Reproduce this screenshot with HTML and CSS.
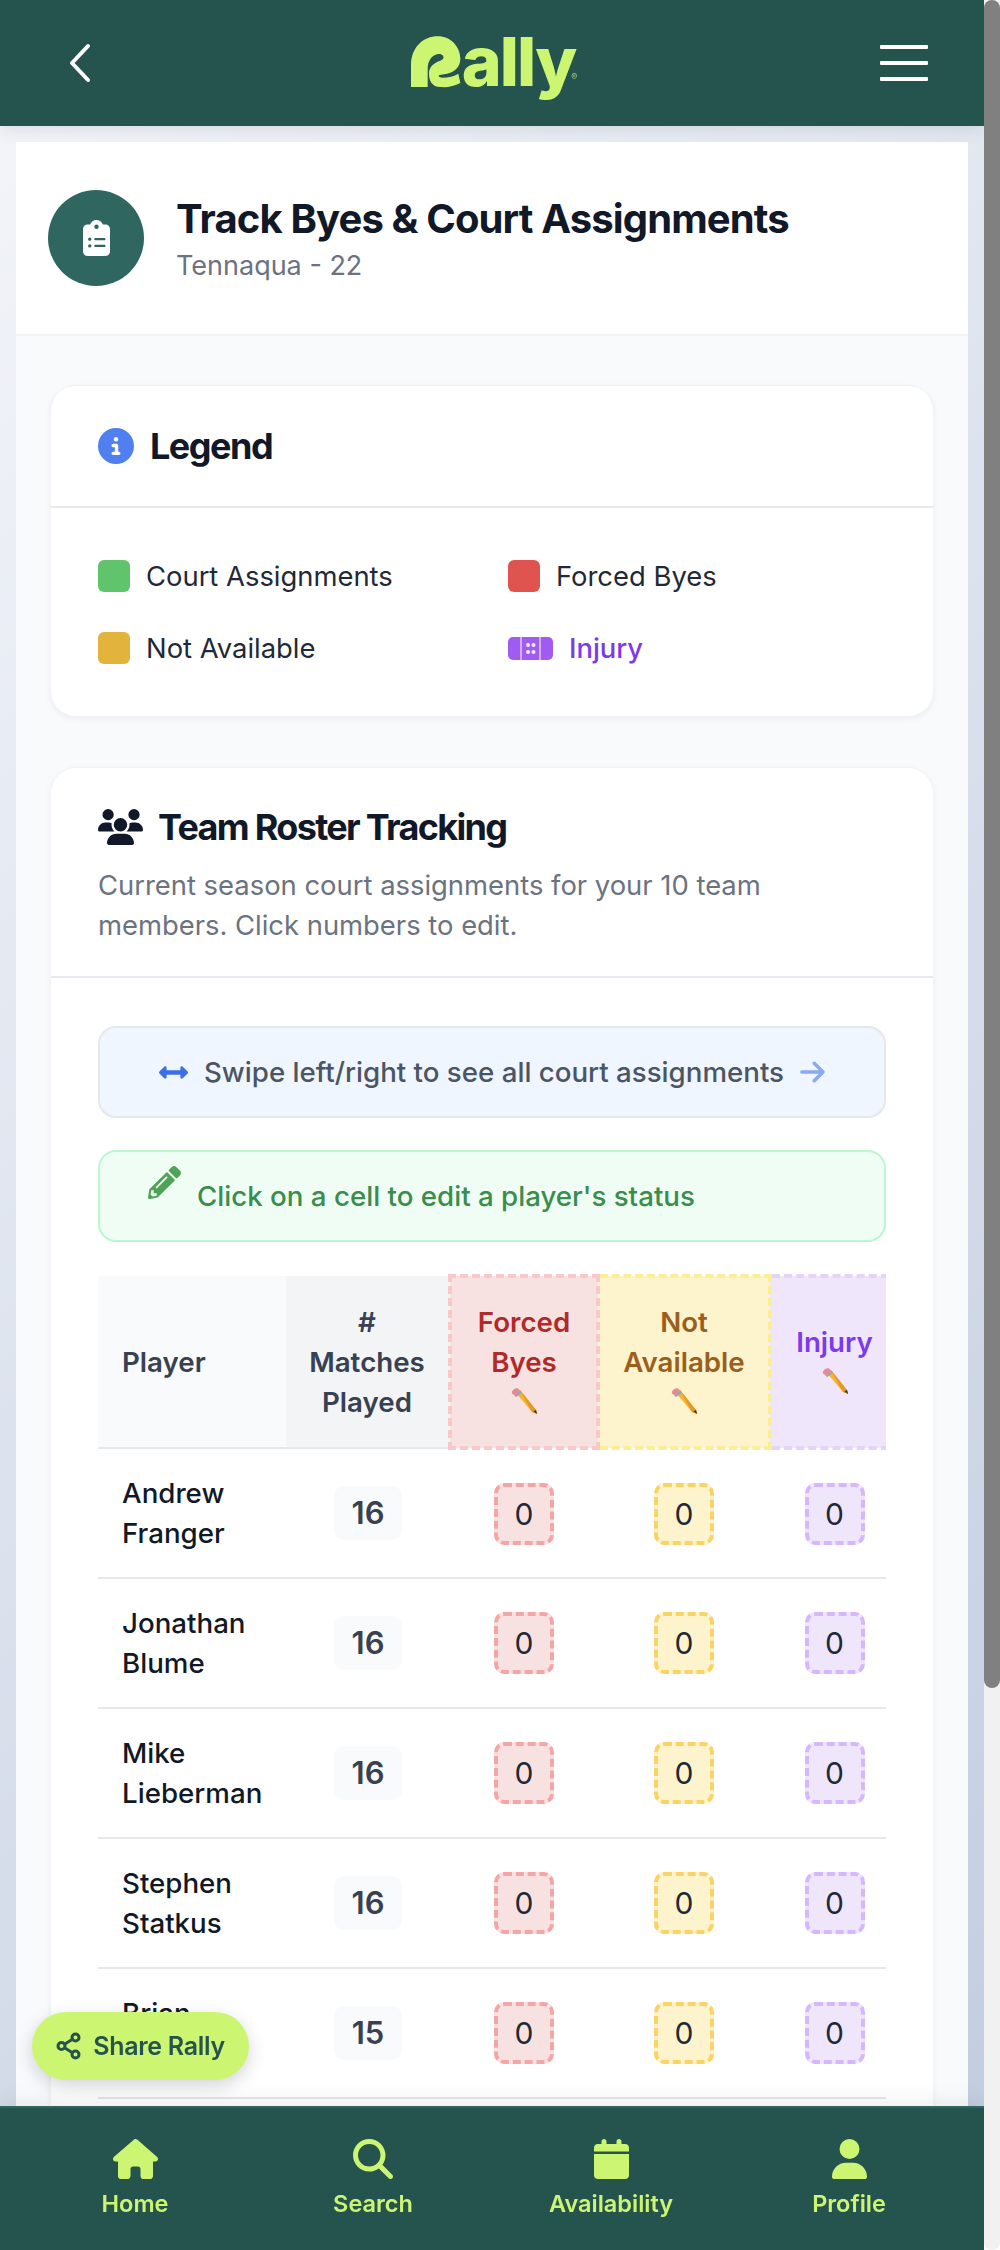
FILE: index.html
```html
<!DOCTYPE html>
<html lang="en">
<head>
    <meta charset="UTF-8">
    <meta name="viewport" content="width=device-width, initial-scale=1.0">
    <title>Track Byes &amp; Court Assignments</title>
    <link rel="stylesheet" href="styles.css">
</head>
<body>
<div class="app">
    <header class="topbar">
        <a class="back" href="#">
            <svg width="24" height="40" viewBox="0 0 24 40"><path d="M20 3 L4 20 L20 37" fill="none" stroke="#fff" stroke-width="4" stroke-linecap="round" stroke-linejoin="round"/></svg>
        </a>
        <a class="logo" href="#">
            <svg class="logo-r" width="50" height="52" viewBox="92 48 150 154"><path fill="#ccf672" d="M92 200 L92 135 C92 80 130 48 172 48 C212 48 240 80 240 115 C240 140 222 155 200 160 L178 164 C172 166 176 172 186 172 C205 172 222 168 234 160 L240 188 C222 198 200 202 180 200 C155 200 146 180 146 160 C146 140 160 128 178 122 C188 118 192 112 188 106 C182 98 170 100 160 106 C148 114 142 128 142 145 L142 200 Z"/></svg>
            <span class="logo-text">ally</span><span class="logo-mark">®</span>
        </a>
        <button class="menu" type="button"><span></span><span></span><span></span></button>
    </header>

    <main class="main">
        <div class="container">
            <!-- Page title -->
            <section class="hero">
                <div class="hero-icon">
                    <svg width="27" height="36" viewBox="0 0 384 512"><path fill="#fff" d="M192 0c-41.8 0-77.4 26.7-90.5 64H64C28.7 64 0 92.7 0 128V448c0 35.3 28.7 64 64 64H320c35.3 0 64-28.7 64-64V128c0-35.3-28.7-64-64-64H282.5C269.4 26.7 233.8 0 192 0zm0 64a32 32 0 1 1 0 64 32 32 0 1 1 0-64zM72 272a24 24 0 1 1 48 0 24 24 0 1 1 -48 0zm104-16H304c8.8 0 16 7.2 16 16s-7.2 16-16 16H176c-8.8 0-16-7.2-16-16s7.2-16 16-16zM72 368a24 24 0 1 1 48 0 24 24 0 1 1 -48 0zm88 0c0-8.8 7.2-16 16-16H304c8.8 0 16 7.2 16 16s-7.2 16-16 16H176c-8.8 0-16-7.2-16-16z"/></svg>
                </div>
                <div>
                    <h1>Track Byes &amp; Court Assignments</h1>
                    <p class="hero-sub">Tennaqua - 22</p>
                </div>
            </section>

            <div class="cards">
                <!-- Legend -->
                <section class="card">
                    <div class="card-head legend-head">
                        <svg width="36" height="36" viewBox="0 0 512 512"><path fill="#5080ef" d="M256 512A256 256 0 1 0 256 0a256 256 0 1 0 0 512zM216 336h24V272H216c-13.3 0-24-10.7-24-24s10.7-24 24-24h48c13.3 0 24 10.7 24 24v88h8c13.3 0 24 10.7 24 24s-10.7 24-24 24H216c-13.3 0-24-10.7-24-24s10.7-24 24-24zm40-208a32 32 0 1 1 0 64 32 32 0 1 1 0-64z"/></svg>
                        <h2>Legend</h2>
                    </div>
                    <div class="legend">
                        <div class="legend-item"><span class="swatch green"></span>Court Assignments</div>
                        <div class="legend-item"><span class="swatch red"></span>Forced Byes</div>
                        <div class="legend-item"><span class="swatch amber"></span>Not Available</div>
                        <div class="legend-item injury">
                            <svg width="45" height="23" viewBox="0 0 45 23">
                                <rect width="45" height="23" rx="5" fill="#a05cf0"/>
                                <path d="M13 0V23M32 0V23" stroke="#f3eafd" stroke-width="1.2"/>
                                <circle cx="20" cy="8" r="2" fill="#f3eafd"/><circle cx="25.500" cy="8" r="2" fill="#f3eafd"/>
                                <circle cx="20" cy="15" r="2" fill="#f3eafd"/><circle cx="25.500" cy="15" r="2" fill="#f3eafd"/>
                            </svg>
                            Injury
                        </div>
                    </div>
                </section>

                <!-- Team roster -->
                <section class="card">
                    <div class="card-head roster-head">
                        <div class="roster-title">
                            <svg width="45" height="36" viewBox="0 0 640 512"><path fill="#111827" d="M144 0a80 80 0 1 1 0 160A80 80 0 1 1 144 0zM512 0a80 80 0 1 1 0 160A80 80 0 1 1 512 0zM0 298.7C0 239.8 47.8 192 106.7 192h42.7c15.9 0 31 3.5 44.6 9.7c-1.3 7.2-1.9 14.7-1.9 22.3c0 38.2 16.8 72.5 43.3 96c-.2 0-.4 0-.7 0H21.3C9.6 320 0 310.4 0 298.7zM405.3 320c-.2 0-.4 0-.7 0c26.6-23.5 43.3-57.8 43.3-96c0-7.6-.7-15-1.9-22.3c13.6-6.3 28.7-9.7 44.6-9.7h42.7C592.2 192 640 239.8 640 298.7c0 11.8-9.6 21.3-21.3 21.3H405.3zM224 224a96 96 0 1 1 192 0 96 96 0 1 1 -192 0zM128 485.3C128 411.7 187.7 352 261.3 352H378.7C452.3 352 512 411.7 512 485.3c0 14.7-11.9 26.7-26.7 26.7H154.7c-14.7 0-26.7-11.9-26.7-26.7z"/></svg>
                            <h2>Team Roster Tracking</h2>
                        </div>
                        <p class="roster-sub">Current season court assignments for your 10 team members. Click numbers to edit.</p>
                    </div>
                    <div class="roster-body">
                        <div class="note note-blue">
                            <svg width="29" height="29" viewBox="0 0 512 512"><path fill="#3b6ee8" d="M377.941 169.941V216H134.059v-46.059c0-21.382-25.851-32.09-40.971-16.971L7.029 239.029c-9.373 9.373-9.373 24.569 0 33.941l86.059 86.059c15.119 15.119 40.971 4.411 40.971-16.971V296h243.882v46.059c0 21.382 25.851 32.09 40.971 16.971l86.059-86.059c9.373-9.373 9.373-24.569 0-33.941l-86.059-86.059c-15.12-15.12-40.971-4.412-40.971 16.97z"/></svg>
                            <span>Swipe left/right to see all court assignments</span>
                            <svg width="25" height="28" viewBox="0 0 448 512"><path fill="#8aa8f5" d="M438.6 278.6c12.5-12.5 12.5-32.8 0-45.3l-160-160c-12.5-12.5-32.8-12.5-45.3 0s-12.5 32.8 0 45.3L338.8 224 32 224c-17.7 0-32 14.3-32 32s14.3 32 32 32l306.7 0L233.4 393.4c-12.5 12.5-12.5 32.8 0 45.3s32.8 12.5 45.3 0l160-160z"/></svg>
                        </div>
                        <div class="note note-green">
                            <svg class="note-pencil" width="33" height="33" viewBox="0 0 512 512"><path fill="#4fa356" d="M497.9 142.1l-46.1 46.1c-4.7 4.7-12.3 4.7-17 0l-111-111c-4.7-4.7-4.7-12.3 0-17l46.1-46.1c18.7-18.7 49.1-18.7 67.9 0l60.1 60.1c18.8 18.7 18.8 49.1 0 67.9zM284.2 99.8L21.6 362.4.4 483.9c-2.9 16.4 11.4 30.6 27.8 27.8l121.5-21.3 262.6-262.6c4.7-4.7 4.7-12.3 0-17l-111-111c-4.8-4.7-12.4-4.7-17.1 0zM124.1 339.9c-5.5-5.5-5.5-14.3 0-19.8l154-154c5.5-5.5 14.3-5.5 19.8 0s5.5 14.3 0 19.8l-154 154c-5.5 5.5-14.3 5.5-19.8 0zM88 424h48v36.3l-64.5 11.3-31.1-31.1L51.7 376H88v48z"/></svg>
                            <span>Click on a cell to edit a player's status</span>
                        </div>

                        <div class="table-wrap">
                            <table class="roster">
                                <colgroup>
                                    <col class="col-player"><col class="col-played"><col class="col-forced"><col class="col-avail"><col class="col-injury">
                                </colgroup>
                                <thead>
                                    <tr>
                                        <th class="th-player">Player</th>
                                        <th class="th-played">#<br>Matches<br>Played</th>
                                        <th class="th-forced">Forced<br>Byes<br><svg class="emoji" width="28" height="28" viewBox="0 0 28 28"><use href="#pencil"/></svg></th>
                                        <th class="th-avail">Not<br>Available<br><svg class="emoji" width="28" height="28" viewBox="0 0 28 28"><use href="#pencil"/></svg></th>
                                        <th class="th-injury">Injury<br><svg class="emoji" width="28" height="28" viewBox="0 0 28 28"><use href="#pencil"/></svg></th>
                                    </tr>
                                </thead>
                                <tbody id="rosterRows"></tbody>
                            </table>
                        </div>
                    </div>
                </section>
            </div>
        </div>
    </main>

    <nav class="bottom-nav">
        <a href="#" class="nav-item">
            <svg width="45" height="40" viewBox="0 0 576 512"><path d="M575.8 255.5c0 18-15 32.1-32 32.1h-32l.7 160.2c0 2.7-.2 5.4-.5 8.1V472c0 22.1-17.9 40-40 40H456c-1.1 0-2.2 0-3.3-.1c-1.4 .1-2.8 .1-4.2 .1H416 392c-22.1 0-40-17.9-40-40V448 384c0-17.7-14.3-32-32-32H256c-17.7 0-32 14.3-32 32v64 24c0 22.1-17.9 40-40 40H160 128.1c-1.5 0-3-.1-4.5-.2c-1.2 .1-2.4 .2-3.6 .2H104c-22.1 0-40-17.9-40-40V360c0-.9 0-1.9 .1-2.8V287.6H32c-18 0-32-14-32-32.1c0-9 3-17 10-24L266.4 8c7-7 15-8 22-8s15 2 21 7L564.8 231.5c8 7 12 15 11 24z"/></svg>
            Home
        </a>
        <a href="#" class="nav-item">
            <svg width="40" height="40" viewBox="0 0 512 512"><path d="M416 208c0 45.9-14.9 88.3-40 122.7L502.6 457.4c12.5 12.5 12.5 32.8 0 45.3s-32.8 12.5-45.3 0L330.7 376c-34.4 25.2-76.8 40-122.7 40C93.1 416 0 322.9 0 208S93.1 0 208 0S416 93.1 416 208zM208 352a144 144 0 1 0 0-288 144 144 0 1 0 0 288z"/></svg>
            Search
        </a>
        <a href="#" class="nav-item">
            <svg width="35" height="40" viewBox="0 0 448 512"><path d="M96 32V64H48C21.5 64 0 85.5 0 112v48H448V112c0-26.5-21.5-48-48-48H352V32c0-17.7-14.3-32-32-32s-32 14.3-32 32V64H160V32c0-17.7-14.3-32-32-32S96 14.3 96 32zM448 192H0V464c0 26.5 21.5 48 48 48H400c26.5 0 48-21.5 48-48V192z"/></svg>
            Availability
        </a>
        <a href="#" class="nav-item">
            <svg width="35" height="40" viewBox="0 0 448 512"><path d="M224 256A128 128 0 1 0 224 0a128 128 0 1 0 0 256zm-45.7 48C79.8 304 0 383.8 0 482.3C0 498.7 13.3 512 29.7 512H418.3c16.4 0 29.7-13.3 29.7-29.7C448 383.8 368.2 304 269.7 304H178.3z"/></svg>
            Profile
        </a>
    </nav>
</div>

<!-- Page scrollbar -->
<div class="scrollbar"><div class="scrollbar-thumb"></div></div>

<button class="share" type="button">
    <svg width="25" height="28" viewBox="0 0 25 28"><g fill="none" stroke="#25544f" stroke-width="3"><circle cx="19.5" cy="5.5" r="3.5"/><circle cx="5.5" cy="14" r="3.5"/><circle cx="19.5" cy="22.5" r="3.5"/><path d="M8.5 12.2 L16.5 7.3 M8.5 15.8 L16.5 20.7"/></g></svg>
    Share Rally
</button>

<!-- Pencil used in the editable column headers -->
<svg width="0" height="0" class="defs">
    <defs>
        <g id="pencil">
            <path d="M6 6 L10 3 L26 23 L27 27 L22 25 Z" fill="#f2b632"/>
            <path d="M10 3 L26 23 L27 27 L22 25 L17 16 Z" fill="#e39a23"/>
            <path d="M2 6.5 C1 4 5 0.5 8 1.5 L11 4.5 L5.5 9 Z" fill="#e88a93"/>
            <path d="M4.5 8.5 L10.5 3.8 L12 5.5 L6 10.3 Z" fill="#9aa7b5"/>
            <path d="M23.5 24.2 L26 23 L27 27 Z" fill="#2b2b2b"/>
        </g>
    </defs>
</svg>

<script>
    // Players shown in the table
    const players = [
        { name: ['Andrew', 'Franger'], played: 16 },
        { name: ['Jonathan', 'Blume'], played: 16 },
        { name: ['Mike', 'Lieberman'], played: 16 },
        { name: ['Stephen', 'Statkus'], played: 16 },
        { name: ['Brian', '&nbsp;'], played: 15 }
    ];

    const rows = document.getElementById('rosterRows');
    players.forEach(player => {
        const tr = document.createElement('tr');
        tr.innerHTML = `
            <td class="td-name">${player.name[0]}<br>${player.name[1]}</td>
            <td><span class="played">${player.played}</span></td>
            <td><span class="count count-forced">0</span></td>
            <td><span class="count count-avail">0</span></td>
            <td><span class="count count-injury">0</span></td>
        `;
        rows.appendChild(tr);
    });
</script>
</body>
</html>
```
FILE: styles.css
```css
* {
    box-sizing: border-box;
}
html, body {
    margin: 0;
    height: 100%;
    overflow: hidden;
    background: #fff;
}
body {
    font-family: Inter, "Liberation Sans", sans-serif;
    color: #111827;
    display: flex;
}
h1, h2, p {
    margin: 0;
}
a {
    color: inherit;
    text-decoration: none;
}
.defs {
    position: absolute;
}

/* shell */
.app {
    flex: 1;
    min-width: 0;
    height: 100vh;
    overflow: hidden;
}
.scrollbar {
    width: 16px;
    height: 100vh;
    flex: none;
    background: #f1f1f1;
    border-radius: 0 0 8px 8px;
}
.scrollbar-thumb {
    height: 1688px;
    background: #808080;
    border-radius: 8px;
}

/* top bar */
.topbar {
    position: sticky;
    top: 0;
    z-index: 5;
    height: 126px;
    background: #25544f;
    box-shadow: 0 4px 16px rgba(30, 41, 59, 0.1);
    display: flex;
    align-items: center;
    justify-content: space-between;
    padding: 0 56px 0 68px;
}
.back {
    display: flex;
    width: 40px;
}
.logo {
    display: flex;
    align-items: flex-start;
    color: #ccf672;
    height: 64px;
}
.logo-r {
    margin-top: 5px;
    flex: none;
}
.logo-text {
    font-size: 68px;
    font-weight: 800;
    line-height: 60px;
    letter-spacing: -2px;
    margin-left: 1px;
}
.logo-mark {
    font-size: 9px;
    align-self: flex-end;
    margin-bottom: 13px;
    margin-left: -4px;
    opacity: 0.7;
}
.menu {
    width: 48px;
    background: none;
    border: none;
    padding: 0;
    display: flex;
    flex-direction: column;
    gap: 12px;
}
.menu span {
    height: 4px;
    background: #fff;
    border-radius: 1px;
}

/* page */
.main {
    min-height: 2730px;
    padding: 16px 16px 0;
    display: flex;
    background: linear-gradient(135deg, #f2f4f9, #b7c4da);
}
.container {
    flex: 1;
    min-width: 0;
    background: #f8fafc;
}
.hero {
    height: 194px;
    background: #fff;
    border-bottom: 2px solid #f1f3f6;
    padding: 48px 32px;
    display: flex;
    gap: 32px;
}
.hero-icon {
    width: 96px;
    height: 96px;
    border-radius: 50%;
    background: #2f6660;
    display: flex;
    align-items: center;
    justify-content: center;
    flex: none;
}
h1 {
    font-size: 40px;
    font-weight: 700;
    line-height: 50px;
    letter-spacing: -0.87px;
    margin-top: 4px;
}
.hero-sub {
    font-size: 27px;
    line-height: 40px;
    color: #6b7280;
    margin-top: 2px;
}
.cards {
    padding: 49px 34px 51px;
    display: flex;
    flex-direction: column;
    gap: 50px;
}
.card {
    background: #fff;
    border: 1px solid #f1f3f6;
    border-radius: 26px;
    box-shadow: 0 2px 6px rgba(15, 23, 42, 0.05);
}
.card-head {
    border-bottom: 2px solid #e8e9ef;
    padding: 0 47px;
}
h2 {
    font-size: 36px;
    font-weight: 700;
    letter-spacing: -1.5px;
}

/* legend */
.legend-head {
    height: 122px;
    display: flex;
    align-items: center;
    gap: 16px;
}
.legend {
    padding: 52px 47px;
    display: grid;
    grid-template-columns: 410px 1fr;
    row-gap: 40px;
}
.legend-item {
    height: 32px;
    display: flex;
    align-items: center;
    gap: 16px;
    font-size: 27.4px;
    color: #1f2937;
}
.swatch {
    width: 32px;
    height: 32px;
    border-radius: 6px;
}
.green { background: #5fc46b; }
.red { background: #e0544f; }
.amber { background: #e2b43c; }
.injury {
    color: #7c3aed;
    font-weight: 500;
}

/* roster */
.roster-head {
    height: 210px;
    padding-top: 37px;
}
.roster-title {
    display: flex;
    align-items: center;
    gap: 15px;
}
.roster-title h2 {
    letter-spacing: -1.7px;
}
.roster-sub {
    max-width: 700px;
    margin-top: 16px;
    font-size: 27.4px;
    line-height: 40px;
    color: #6b7280;
}
.roster-body {
    padding: 48px 47px;
}
.note {
    height: 92px;
    border: 2px solid #e5e7eb;
    border-radius: 18px;
    background: #eff6ff;
    font-size: 27.7px;
    font-weight: 500;
    color: #4b5563;
    display: flex;
    align-items: center;
    justify-content: center;
    gap: 16px;
}
.note-green {
    margin-top: 32px;
    background: #f0fdf4;
    border-color: #bbf7d0;
    color: #388e4a;
    justify-content: flex-start;
    padding-left: 48px;
    gap: 16px;
}
.note-pencil {
    position: relative;
    top: -14px;
}
.table-wrap {
    margin-top: 32px;
    overflow: hidden;
}
.roster {
    width: 801px;
    table-layout: fixed;
    border-collapse: collapse;
}
.col-player { width: 188px; }
.col-played { width: 164px; }
.col-forced { width: 148px; }
.col-avail { width: 172px; }
.col-injury { width: 129px; }
th {
    height: 172px;
    font-size: 27.7px;
    line-height: 40px;
    font-weight: 600;
    color: #374151;
    text-align: center;
    padding: 0;
    border-bottom: 2px solid #e5e7eb;
}
.th-player {
    background: #f9fafb;
    text-align: left;
    padding-left: 24px;
}
.th-played {
    background: #f3f4f6;
}
.th-forced {
    background: #f8e1e1;
    border: 4px dashed #f9c9c9;
    color: #b02a2a;
}
.th-avail {
    background: #fdf3cc;
    border: 4px dashed #fdee96;
    color: #9a5f1c;
}
.th-injury {
    background: #f0e6fc;
    border: 4px dashed #e4d4fb;
    color: #7c3aed;
}
.emoji {
    vertical-align: top;
    margin-top: 5px;
}
td {
    height: 130px;
    padding: 0;
    text-align: center;
    border-bottom: 2px solid #e5e7eb;
    font-size: 30px;
}
.td-name {
    text-align: left;
    padding-left: 24px;
    font-size: 27.7px;
    line-height: 40px;
    font-weight: 500;
    color: #111827;
}
.played {
    display: inline-block;
    width: 68px;
    height: 54px;
    line-height: 54px;
    border-radius: 10px;
    background: #f9fafb;
    font-size: 31px;
    font-weight: 600;
    color: #374151;
}
.count {
    display: inline-block;
    width: 60px;
    height: 62px;
    line-height: 54px;
    border-radius: 10px;
    border: 4px dashed;
    color: #1f2937;
}
.count-forced { background: #f8e1e1; border-color: #f4a6a6; }
.count-avail { background: #fdf3cc; border-color: #f9d465; }
.count-injury { background: #f0e6fc; border-color: #d4b8fb; }

/* bottom nav */
.bottom-nav {
    position: sticky;
    bottom: 0;
    z-index: 5;
    height: 144px;
    background: #25544f;
    border-top: 2px solid #2f6660;
    box-shadow: 0 -4px 20px rgba(0, 0, 0, 0.08);
    display: grid;
    grid-template-columns: repeat(4, 1fr);
    padding: 31px 16px 0;
}
.nav-item {
    display: flex;
    flex-direction: column;
    align-items: center;
    gap: 9px;
    color: #ccf672;
    font-size: 23.5px;
    line-height: 32px;
    font-weight: 600;
}
.nav-item svg {
    fill: #ccf672;
}

/* floating share button */
.share {
    position: fixed;
    left: 32px;
    bottom: 170px;
    z-index: 6;
    width: 217px;
    height: 68px;
    border: none;
    border-radius: 34px;
    background: #ccf672;
    color: #25544f;
    font-family: inherit;
    font-size: 25px;
    font-weight: 600;
    letter-spacing: -0.3px;
    box-shadow: 0 6px 18px rgba(15, 23, 42, 0.18);
    display: flex;
    align-items: center;
    justify-content: center;
    gap: 12px;
    padding: 0;
}
```
